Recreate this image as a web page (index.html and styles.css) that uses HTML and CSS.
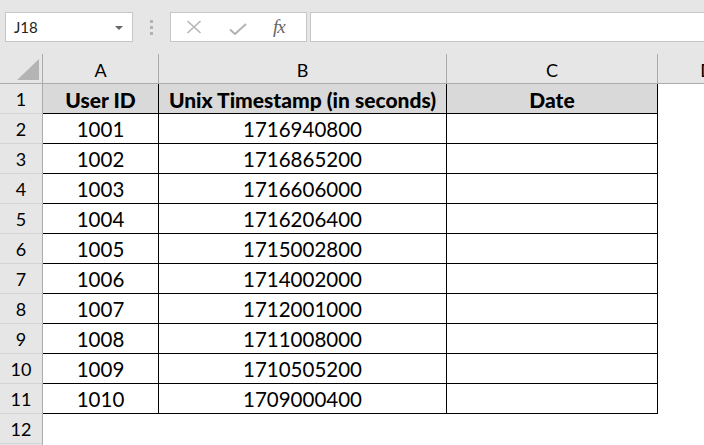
FILE: index.html
```html
<!DOCTYPE html>
<html lang="en">

<head>
  <meta charset="UTF-8" />
  <meta name="viewport" content="width=device-width, initial-scale=1.0" />
  <title>Unix Timestamp</title>
  <link rel="stylesheet" href="styles.css">
</head>

<body>
  <div class="toolbar">
    <div class="namebox">
      <span>J18</span>
      <svg class="drop" width="8" height="4" viewBox="0 0 8 4"><path d="M0 0h8L4 4z" fill="#666" /></svg>
    </div>
    <div class="dots"><i></i><i></i><i></i></div>
    <div class="fxbtns">
      <svg width="16" height="14" viewBox="0 0 16 14"><path d="M1.5 1l13 12M14.5 1l-13 12" stroke="#b3b3b3" stroke-width="1.5" fill="none" /></svg>
      <svg width="18" height="12" viewBox="0 0 18 12"><path d="M1 6.5l5 4.5 11-10" stroke="#b3b3b3" stroke-width="2" fill="none" /></svg>
      <span class="fx">fx</span>
    </div>
    <div class="formula"></div>
  </div>

  <div class="sheet">
    <div class="hd corner"><span class="tri"></span></div>
    <div class="hd">A</div>
    <div class="hd">B</div>
    <div class="hd">C</div>
    <div class="hd last">D</div>

    <div class="rh">1</div>
    <div class="c th">User ID</div>
    <div class="c th">Unix Timestamp (in seconds)</div>
    <div class="c th">Date</div>
    <div class="e"></div>

    <div class="rh">2</div><div class="c">1001</div><div class="c">1716940800</div><div class="c"></div><div class="e"></div>
    <div class="rh">3</div><div class="c">1002</div><div class="c">1716865200</div><div class="c"></div><div class="e"></div>
    <div class="rh">4</div><div class="c">1003</div><div class="c">1716606000</div><div class="c"></div><div class="e"></div>
    <div class="rh">5</div><div class="c">1004</div><div class="c">1716206400</div><div class="c"></div><div class="e"></div>
    <div class="rh">6</div><div class="c">1005</div><div class="c">1715002800</div><div class="c"></div><div class="e"></div>
    <div class="rh">7</div><div class="c">1006</div><div class="c">1714002000</div><div class="c"></div><div class="e"></div>
    <div class="rh">8</div><div class="c">1007</div><div class="c">1712001000</div><div class="c"></div><div class="e"></div>
    <div class="rh">9</div><div class="c">1008</div><div class="c">1711008000</div><div class="c"></div><div class="e"></div>
    <div class="rh">10</div><div class="c">1009</div><div class="c">1710505200</div><div class="c"></div><div class="e"></div>
    <div class="rh">11</div><div class="c">1010</div><div class="c">1709000400</div><div class="c"></div><div class="e"></div>

    <div class="rh">12</div><div class="e"></div><div class="e"></div><div class="e"></div><div class="e"></div>
    <div class="rh"></div><div class="e"></div><div class="e"></div><div class="e"></div><div class="e"></div>
  </div>
</body>

</html>
```

FILE: styles.css
```css
* {
  box-sizing: border-box;
}

html,
body {
  margin: 0;
  width: 704px;
  height: 445px;
  overflow: hidden;
  background: #fff;
  font-family: Lato, "Liberation Sans", sans-serif;
  color: #000;
}

/* formula bar */
.toolbar {
  display: flex;
  align-items: flex-start;
  height: 54px;
  padding: 12px 0 0 5px;
  background: #e6e6e6;
}

.namebox {
  display: flex;
  align-items: center;
  justify-content: space-between;
  width: 128px;
  height: 30px;
  padding: 0 9px 0 8px;
  border: 1px solid #c6c6c6;
  background: #fff;
  font-size: 15px;
  color: #222;
}

.namebox .drop {
  margin-top: 2px;
}

.dots {
  display: flex;
  flex-direction: column;
  gap: 3px;
  margin: 8px 0 0 17px;
}

.dots i {
  display: block;
  width: 3px;
  height: 3px;
  background: #b3b3b3;
}

.fxbtns {
  display: flex;
  align-items: center;
  width: 137px;
  height: 30px;
  margin-left: 17px;
  padding-left: 15px;
  border: 1px solid #c6c6c6;
  background: #fff;
}

.fxbtns svg + svg {
  margin-left: 27px;
  margin-top: 3px;
}

.fx {
  margin-left: 26px;
  font-family: "Liberation Serif", serif;
  font-style: italic;
  font-size: 19px;
  color: #666;
  letter-spacing: -1px;
}

.formula {
  flex: 1;
  height: 30px;
  margin-left: 3px;
  border: 1px solid #c6c6c6;
  border-right: 0;
  background: #fff;
}

/* sheet grid */
.sheet {
  display: grid;
  grid-template-columns: 43px 116px 288px 211px 98px;
  grid-auto-rows: 30px;
  width: 756px;
}

.hd {
  display: flex;
  align-items: center;
  justify-content: center;
  padding-top: 2px;
  background: #e6e6e6;
  border-right: 1px solid #ababab;
  border-bottom: 1px solid #ababab;
  font-size: 18px;
}

.hd.last {
  border-right: 0;
}

.corner {
  position: relative;
}

.tri {
  position: absolute;
  right: 3px;
  bottom: 3px;
  width: 0;
  height: 0;
  border-style: solid;
  border-width: 0 0 21px 22px;
  border-color: transparent transparent #b4b4b4 transparent;
}

.rh {
  display: flex;
  align-items: center;
  justify-content: center;
  padding-top: 1px;
  background: #e6e6e6;
  border-right: 1px solid #ababab;
  border-bottom: 1px solid #d4d4d4;
  font-size: 18px;
}

.c {
  display: flex;
  align-items: center;
  justify-content: center;
  padding-top: 1px;
  border-right: 1px solid #000;
  border-bottom: 1px solid #000;
  font-size: 20.5px;
  white-space: nowrap;
}

.th {
  background: #d9d9d9;
  font-size: 21px;
  font-weight: 900;
}

.e {
  background: #fff;
}
```
